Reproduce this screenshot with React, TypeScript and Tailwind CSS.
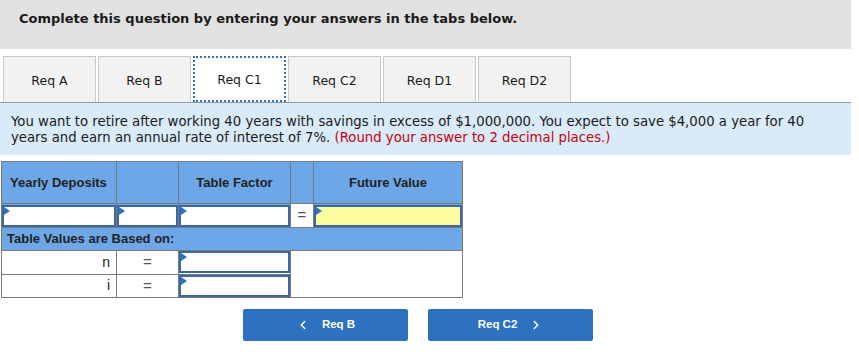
import { ChevronLeft, ChevronRight } from "lucide-react";

const TABS = ["Req A", "Req B", "Req C1", "Req C2", "Req D1", "Req D2"];
const ACTIVE = "Req C1";

function Flag() {
  return (
    <span className="absolute left-0 top-0 h-0 w-0 border-y-[4px] border-l-[6px] border-y-transparent border-l-[#2f6fc4]" />
  );
}

function Entry({ yellow = false }: { yellow?: boolean }) {
  return (
    <div
      className={`relative h-[22px] w-full border-2 border-[#3a68a6] ${
        yellow ? "bg-[#fbfd9d]" : "bg-white"
      }`}
    >
      <Flag />
    </div>
  );
}

export default function App() {
  return (
    <div className="w-[851px] bg-white text-[#1a1a1a]" style={{ fontFamily: "'DejaVu Sans', Verdana, sans-serif" }}>
      {/* Header */}
      <div className="h-[49px] bg-[#e1e1e1] pl-[19px] pt-[11px] text-[13px] font-bold leading-4">
        Complete this question by entering your answers in the tabs below.
      </div>

      {/* Tabs */}
      <div className="mt-[7px] flex gap-[2px] border-b border-[#9a9a9a] pl-[3px]">
        {TABS.map((t) => (
          <div
            key={t}
            className={`flex h-[46px] w-[93px] items-center justify-center pt-[3px] text-[12.5px] ${
              t === ACTIVE
                ? "-mb-px border-2 border-dotted border-[#2f6fc4] bg-white"
                : "border border-b-0 border-[#c9c9c9] bg-[#f2f2f2]"
            }`}
          >
            {t}
          </div>
        ))}
      </div>

      {/* Question */}
      <div className="bg-[#d9eaf8] pb-[9px] pl-[11px] pt-[11px] text-[13.25px] leading-4">
        You want to retire after working 40 years with savings in excess of $1,000,000. You expect to save $4,000 a year for 40
        <br />
        years and earn an annual rate of interest of 7%. <span className="text-[#c8000a]">(Round your answer to 2 decimal places.)</span>
      </div>

      {/* Worksheet */}
      <table
        className="ml-px mt-[6px] w-[461px] table-fixed border-collapse text-[13px] text-[#222]"
        style={{ fontFamily: "'Liberation Sans', Arial, sans-serif" }}
      >
        <colgroup>
          <col className="w-[115px]" />
          <col className="w-[62px]" />
          <col className="w-[112px]" />
          <col className="w-[23px]" />
          <col className="w-[149px]" />
        </colgroup>
        <tbody>
          <tr className="h-[42px] bg-[#6ea7e7] font-bold">
            <td className="border border-[#7a7a7a] px-[8px] text-left">Yearly Deposits</td>
            <td className="border border-[#7a7a7a]" />
            <td className="border border-[#7a7a7a] text-center">Table Factor</td>
            <td className="border border-[#7a7a7a]" />
            <td className="border border-[#7a7a7a] text-center">Future Value</td>
          </tr>
          <tr className="h-[24px] bg-[#6ea7e7]">
            <td className="border border-[#7a7a7a] p-0">
              <Entry />
            </td>
            <td className="border border-[#7a7a7a] p-0">
              <Entry />
            </td>
            <td className="border border-[#7a7a7a] p-0">
              <Entry />
            </td>
            <td className="border border-[#7a7a7a] bg-white text-center text-[15px] text-[#555]">=</td>
            <td className="border border-[#7a7a7a] p-0">
              <Entry yellow />
            </td>
          </tr>
          <tr className="h-[23px] bg-[#6ea7e7] font-bold">
            <td colSpan={5} className="border border-[#7a7a7a] px-[5px]">
              Table Values are Based on:
            </td>
          </tr>
          <tr className="h-[23px] bg-white text-[14px]">
            <td className="border border-[#7a7a7a] px-[6px] text-right">n</td>
            <td className="border border-[#7a7a7a] text-center text-[15px] text-[#555]">=</td>
            <td className="border border-[#7a7a7a] p-0">
              <Entry />
            </td>
            <td colSpan={2} rowSpan={2} className="border border-[#7a7a7a]" />
          </tr>
          <tr className="h-[23px] bg-white text-[14px]">
            <td className="border border-[#7a7a7a] px-[6px] text-right">i</td>
            <td className="border border-[#7a7a7a] text-center text-[15px] text-[#555]">=</td>
            <td className="border border-[#7a7a7a] p-0">
              <Entry />
            </td>
          </tr>
        </tbody>
      </table>

      {/* Navigation */}
      <div
        className="ml-[243px] mt-[11px] flex gap-[20px] text-[11.5px] font-bold text-white"
        style={{ fontFamily: "'Liberation Sans', Arial, sans-serif" }}
      >
        <button className="flex h-[32px] w-[165px] items-center justify-center gap-[12px] rounded-[2px] bg-[#2f71c1]">
          <ChevronLeft className="h-[14px] w-[14px]" strokeWidth={2.5} />
          <span>Req B</span>
        </button>
        <button className="flex h-[32px] w-[165px] items-center justify-center gap-[12px] rounded-[2px] bg-[#2f71c1]">
          <span>Req C2</span>
          <ChevronRight className="h-[14px] w-[14px]" strokeWidth={2.5} />
        </button>
      </div>
    </div>
  );
}
